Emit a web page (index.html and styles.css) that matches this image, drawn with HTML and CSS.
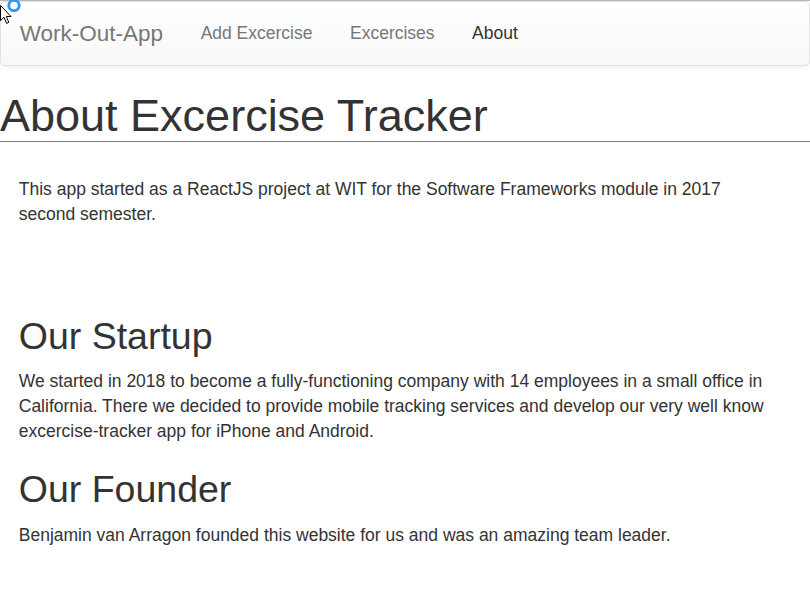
FILE: index.html
```html
<!DOCTYPE html>
<html lang="en">
<head>
<meta charset="utf-8">
<title>Work-Out-App</title>
<link rel="stylesheet" href="styles.css">
</head>
<body>
<div class="topline"></div>
<nav class="navbar">
  <a class="brand" href="#">Work-Out-App</a>
  <ul class="nav">
    <li><a href="#">Add Excercise</a></li>
    <li><a href="#">Excercises</a></li>
    <li><a class="active" href="#">About</a></li>
  </ul>
</nav>
<main class="page">
  <h1 class="title">About Excercise Tracker</h1>
  <section class="content">
    <p class="intro">This app started as a ReactJS project at WIT for the Software Frameworks module in 2017 second semester.</p>
    <h2 class="heading first">Our Startup</h2>
    <p>We started in 2018 to become a fully-functioning company with 14 employees in a small office in California. There we decided to provide mobile tracking services and develop our very well know excercise-tracker app for iPhone and Android.</p>
    <h2 class="heading">Our Founder</h2>
    <p>Benjamin van Arragon founded this website for us and was an amazing team leader.</p>
  </section>
</main>
<svg class="ring" width="18" height="16" viewBox="0 0 18 16"><circle cx="9" cy="5.5" r="5.2" fill="none" stroke="#2f96f3" stroke-width="2.8"/></svg>
<svg class="cursor" width="14" height="22" viewBox="0 0 14 22"><path d="M0.5 0.5 L0.5 15.5 L4 12.3 L6.6 18.4 L8.8 17.4 L6.3 11.5 L11 11.5 Z" fill="#fff" stroke="#000" stroke-width="1" stroke-linejoin="round"/></svg>
</body>
</html>
```
FILE: styles.css
```css
* { box-sizing: border-box; }
html, body { margin: 0; padding: 0; }
body {
  font-family: "Liberation Sans", Arial, Helvetica, sans-serif;
  font-size: 17.5px;
  line-height: 25px;
  color: #333;
  background: #fff;
  width: 810px;
  position: relative;
}
.topline { height: 1px; background: #b9b9b9; }
.navbar {
  display: flex;
  align-items: flex-start;
  height: 65px;
  border: 1px solid #e2e2e2;
  border-radius: 5px;
  background: linear-gradient(to bottom, #ffffff 0, #f8f8f8 100%);
  box-shadow: inset 0 1px 0 rgba(255,255,255,.15), 0 1px 5px rgba(0,0,0,.075);
  margin-bottom: 25px;
}
.brand {
  display: block;
  padding: 18.75px 18.75px;
  font-size: 22.5px;
  line-height: 25px;
  color: #777;
  text-decoration: none;
}
.nav { display: flex; list-style: none; margin: 0; padding: 0; }
.nav a {
  display: block;
  padding: 18.75px 18.75px;
  font-size: 17.5px;
  line-height: 25px;
  color: #777;
  text-decoration: none;
}
.nav a.active { color: #333; }
.page { margin: 0; }
.title {
  margin: 0;
  font-size: 45px;
  line-height: 49.5px;
  font-weight: 500;
  border-bottom: 1px solid #808080;
}
.content { padding: 35px 40px 0 18.75px; }
.content p { margin: 0 0 12.5px; }
.heading {
  margin: 25px 0 12.5px;
  font-size: 37.5px;
  line-height: 41.25px;
  font-weight: 500;
}
.heading.first { margin-top: 89px; }
.ring { position: absolute; left: 5px; top: 0; }
.cursor { position: absolute; left: 0; top: 5px; }
```
